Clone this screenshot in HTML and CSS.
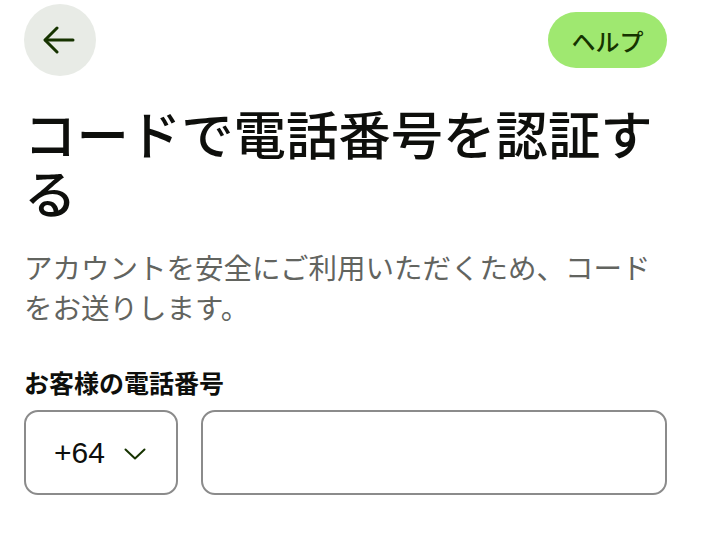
FILE: index.html
```html
<!DOCTYPE html>
<html lang="ja">
<head>
<meta charset="utf-8">
<link rel="stylesheet" href="styles.css">
</head>
<body>
<div class="page">
  <header class="topbar">
    <button class="back" aria-label="戻る">
      <svg width="32" height="28" viewBox="0 0 32 28" fill="none" stroke="#163300" stroke-width="3" stroke-linecap="round" stroke-linejoin="round">
        <path d="M30 14H2.5"/>
        <path d="M14 2L2 14l12 12"/>
      </svg>
    </button>
    <button class="help">ヘルプ</button>
  </header>
  <h1 class="title">コードで電話番号を認証する</h1>
  <p class="subtitle">アカウントを安全にご利用いただくため、コードをお送りします。</p>
  <label class="label">お客様の電話番号</label>
  <div class="phone-row">
    <div class="code-select">
      <span class="code">+64</span>
      <svg class="chev" width="22" height="12" viewBox="0 0 22 12" fill="none" stroke="#163300" stroke-width="2" stroke-linecap="round" stroke-linejoin="round">
        <path d="M1.5 1.5L11 10.5l9.5-9"/>
      </svg>
    </div>
    <div class="phone-input"></div>
  </div>
</div>
</body>
</html>
```
FILE: styles.css
```css
* { box-sizing: border-box; }
html, body { margin: 0; padding: 0; background: #fff; }
body {
  font-family: "Noto Sans CJK JP", "Noto Sans", sans-serif;
  color: #0e0f0c;
}
.page {
  width: 718px;
  padding: 4px 51px 0 24px;
}
.topbar {
  display: flex;
  justify-content: space-between;
  align-items: center;
  height: 72px;
}
.back {
  width: 72px;
  height: 72px;
  border-radius: 50%;
  border: none;
  background: #e8ebe6;
  display: flex;
  align-items: center;
  justify-content: center;
  padding: 0 3px 0 0;
}
.help {
  width: 119px;
  height: 56px;
  border-radius: 28px;
  border: none;
  background: #9fe870;
  color: #163300;
  font-family: "Noto Sans CJK JP", sans-serif;
  font-size: 24px;
  font-weight: 500;
  padding: 0;
}
.title {
  margin: 27px 0 0 0;
  font-size: 52.4px;
  line-height: 59px;
  font-weight: 500;
  letter-spacing: 0;
}
.subtitle {
  margin: 26px 0 0 0;
  font-size: 28.5px;
  line-height: 40px;
  color: #62645f;
  font-weight: 400;
}
.label {
  display: block;
  margin-top: 39px;
  font-size: 25px;
  line-height: 32px;
  font-weight: 700;
}
.phone-row {
  display: flex;
  gap: 23px;
  margin-top: 12px;
}
.code-select {
  width: 154px;
  height: 85px;
  border: 2px solid #8b8b8b;
  border-radius: 14px;
  display: flex;
  align-items: center;
  padding-left: 28px;
  gap: 19px;
}
.code {
  font-family: "Liberation Sans", Arial, sans-serif;
  font-size: 30px;
  color: #0e0f0c;
}
.chev { margin-top: 2px; }
.phone-input {
  flex: 1;
  height: 85px;
  border: 2px solid #8b8b8b;
  border-radius: 14px;
}
```
